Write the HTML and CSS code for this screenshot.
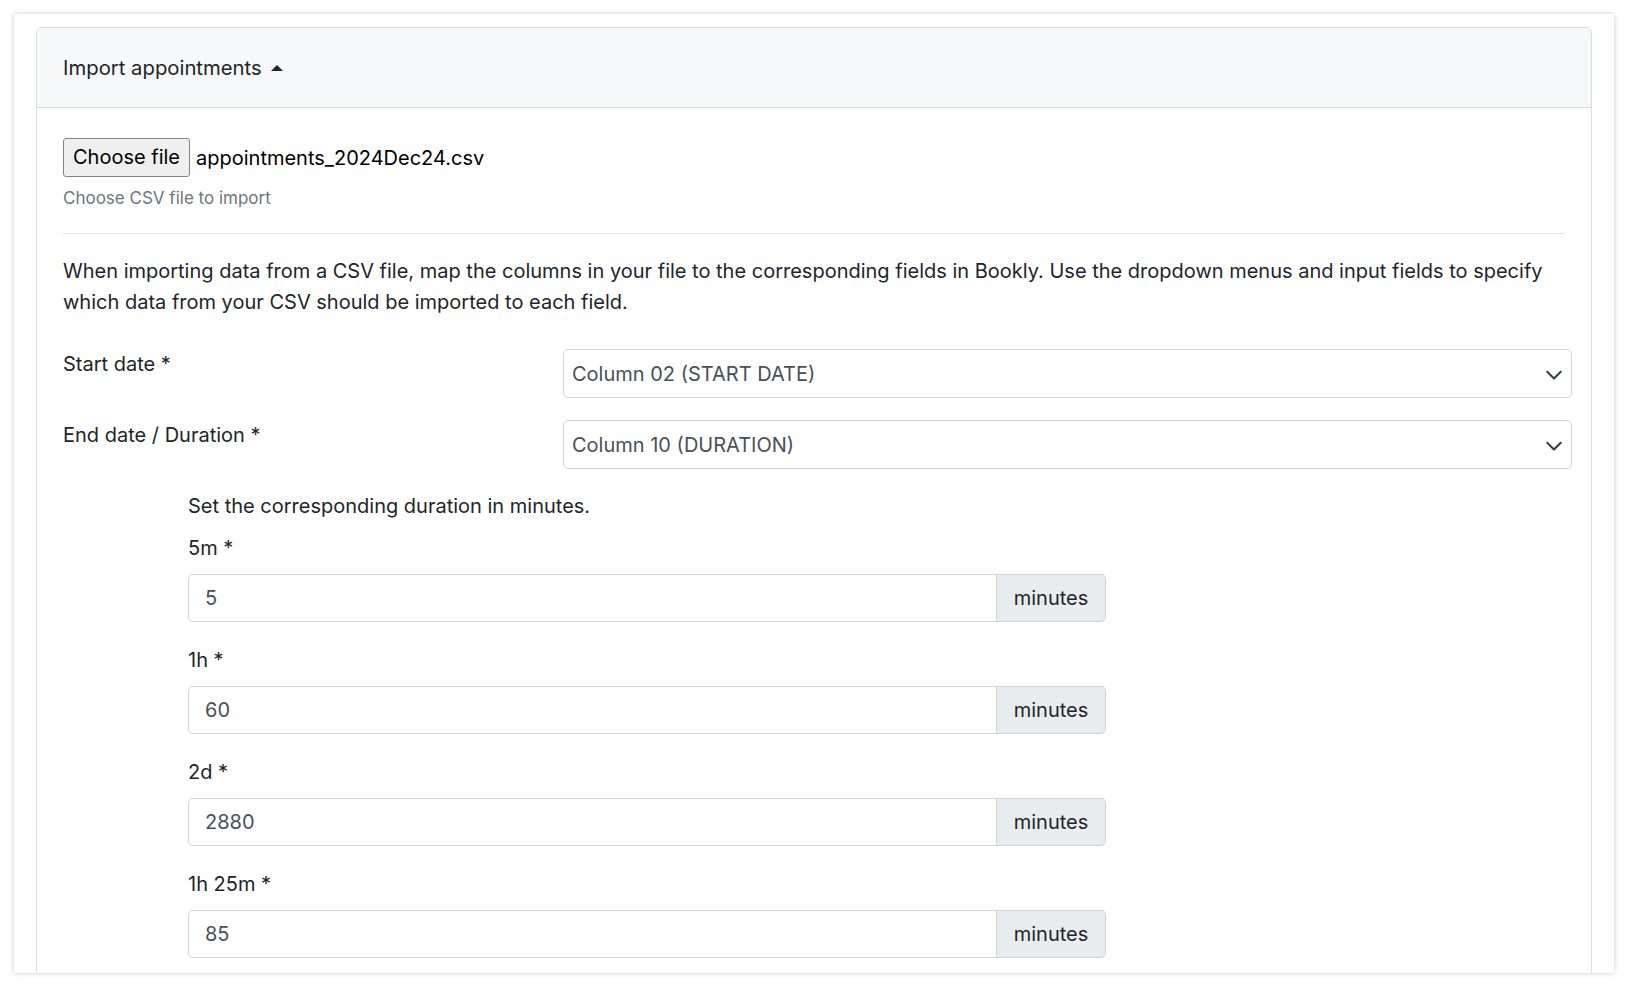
FILE: index.html
```html
<!DOCTYPE html>
<html>
	<head>
		<meta charset="utf-8">
		<title>Import appointments</title>
		<link rel="stylesheet" href="styles.css">
	</head>
	<body>
		<div class="frame">
			<div class="card">
				<div class="cardHeader">
					<span>Import appointments</span>
					<i class="caret"></i>
				</div>
				<div class="cardBody">
					<div class="fileRow">
						<span class="fileBtn">Choose file</span>
						<span class="fileName">appointments_2024Dec24.csv</span>
					</div>
					<div class="formText">Choose CSV file to import</div>
					<hr class="sep">
					<p class="intro">When importing data from a CSV file, map the columns in your file to the corresponding fields in Bookly. Use the dropdown menus and input fields to specify which data from your CSV should be imported to each field.</p>

					<div class="mapRow">
						<label>Start date *</label>
						<div class="select">
							<span>Column 02 (START DATE)</span>
							<svg width="18" height="14" viewBox="0 0 16 12"><path d="M2 4l6 6 6-6" fill="none" stroke="#343a40" stroke-width="1.8" stroke-linecap="round" stroke-linejoin="round"/></svg>
						</div>
					</div>
					<div class="mapRow">
						<label>End date / Duration *</label>
						<div class="select">
							<span>Column 10 (DURATION)</span>
							<svg width="18" height="14" viewBox="0 0 16 12"><path d="M2 4l6 6 6-6" fill="none" stroke="#343a40" stroke-width="1.8" stroke-linecap="round" stroke-linejoin="round"/></svg>
						</div>
					</div>

					<div class="durations">
						<div class="durHint">Set the corresponding duration in minutes.</div>
						<div class="durItem">
							<label>5m *</label>
							<div class="inputGroup">
								<span class="input">5</span>
								<span class="addon">minutes</span>
							</div>
						</div>
						<div class="durItem">
							<label>1h *</label>
							<div class="inputGroup">
								<span class="input">60</span>
								<span class="addon">minutes</span>
							</div>
						</div>
						<div class="durItem">
							<label>2d *</label>
							<div class="inputGroup">
								<span class="input">2880</span>
								<span class="addon">minutes</span>
							</div>
						</div>
						<div class="durItem">
							<label>1h 25m *</label>
							<div class="inputGroup">
								<span class="input">85</span>
								<span class="addon">minutes</span>
							</div>
						</div>
					</div>
				</div>
			</div>
		</div>
	</body>
</html>
```

FILE: styles.css
```css
* {
	margin: 0;
	padding: 0;
	box-sizing: border-box;
}

html,
body {
	height: 100%;
	overflow: hidden;
	background-color: #fff;
}

body {
	font-family: Inter, "Liberation Sans", sans-serif;
	font-size: 20px;
	line-height: 30px;
	color: #212529;
}

.frame {
	width: 1600px;
	height: 959px;
	margin: 14px;
	padding: 13px 22px 0 22px;
	overflow: hidden;
	background-color: #fff;
	box-shadow: 0 0 5px rgba(0, 0, 0, .22);
}

.card {
	border: 1px solid #dcdcdc;
	border-radius: 6px;
	min-height: 1100px;
}

.cardHeader {
	display: flex;
	align-items: center;
	height: 80px;
	padding: 0 26px;
	background-color: #f7f8fa;
	border-bottom: 1px solid #dcdcdc;
	border-radius: 6px 6px 0 0;
	font-size: 20.3px;
}

.caret {
	display: inline-block;
	margin-left: 9px;
	width: 0;
	height: 0;
	border-left: 6px solid transparent;
	border-right: 6px solid transparent;
	border-bottom: 6px solid #212529;
}

.cardBody {
	padding: 30px 26px 0 26px;
}

.fileRow {
	display: flex;
	align-items: center;
}

.fileBtn {
	display: inline-block;
	height: 39px;
	line-height: 37px;
	padding: 0 9px;
	background-color: #efefef;
	border: 1px solid #858585;
	border-radius: 3px;
	color: #000;
}

.fileName {
	margin-left: 6px;
	color: #000;
}

.formText {
	margin-top: 8px;
	font-size: 17px;
	line-height: 26px;
	color: #6c757d;
}

.sep {
	border: 0;
	border-top: 1px solid #e1e1e1;
	margin: 22px 1px 22px 0;
}

.intro {
	line-height: 31px;
	margin-bottom: 31px;
	padding-right: 20px;
}

.mapRow {
	display: grid;
	grid-template-columns: 500px 1fr;
	margin-right: -7px;
	margin-bottom: 22px;
}

.select {
	display: flex;
	align-items: center;
	justify-content: space-between;
	height: 49px;
	padding: 0 8px 0 8px;
	border: 1px solid #ced4da;
	border-radius: 5px;
	color: #495057;
}

.durations {
	padding-left: 125px;
}

.durHint {
	margin-bottom: 12px;
}

.durItem {
	width: 918px;
	margin-bottom: 23px;
}

.durItem label {
	display: block;
	margin-bottom: 11px;
}

.inputGroup {
	display: flex;
	height: 48px;
}

.inputGroup .input {
	flex: 1;
	display: flex;
	align-items: center;
	padding: 0 16px;
	border: 1px solid #ced4da;
	border-radius: 5px 0 0 5px;
	color: #495057;
}

.inputGroup .addon {
	display: flex;
	align-items: center;
	width: 109px;
	justify-content: center;
	background-color: #e9ecef;
	border: 1px solid #ced4da;
	border-left: 0;
	border-radius: 0 5px 5px 0;
	color: #212529;
}
```
